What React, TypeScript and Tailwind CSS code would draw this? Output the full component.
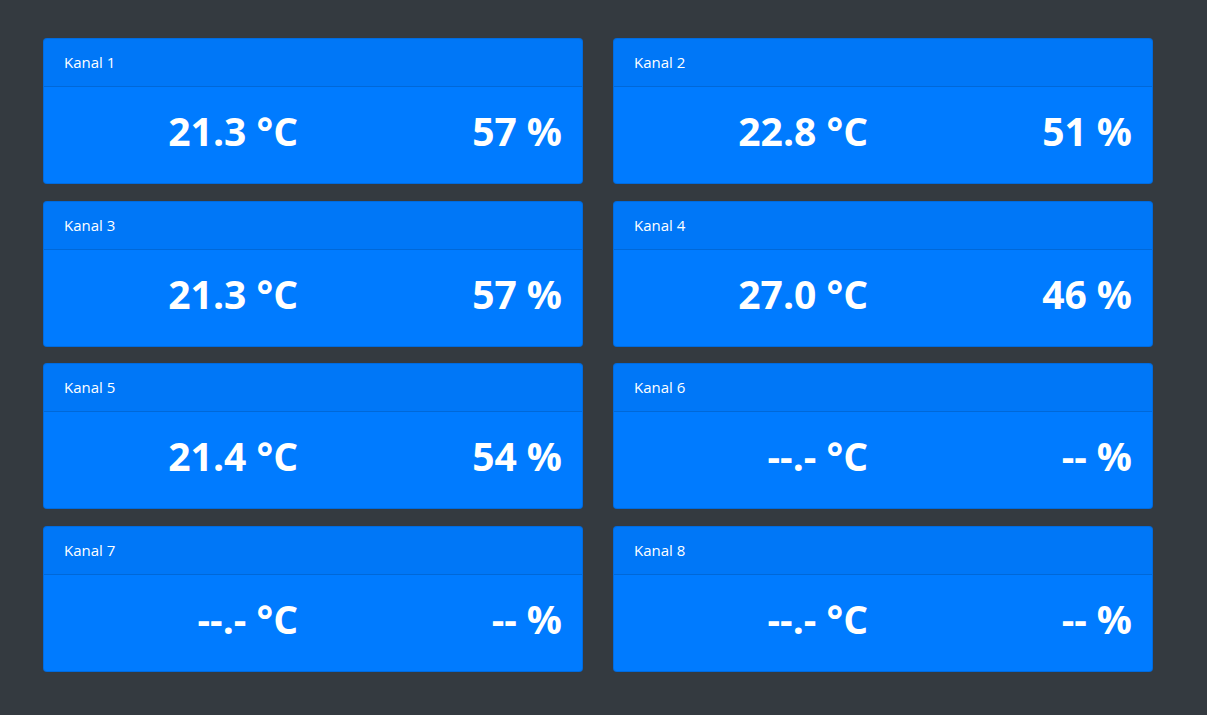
import React from 'react';

const channels = [
  { name: 'Kanal 1', temp: '21.3 °C', hum: '57 %' },
  { name: 'Kanal 2', temp: '22.8 °C', hum: '51 %' },
  { name: 'Kanal 3', temp: '21.3 °C', hum: '57 %' },
  { name: 'Kanal 4', temp: '27.0 °C', hum: '46 %' },
  { name: 'Kanal 5', temp: '21.4 °C', hum: '54 %' },
  { name: 'Kanal 6', temp: '--.- °C', hum: '-- %' },
  { name: 'Kanal 7', temp: '--.- °C', hum: '-- %' },
  { name: 'Kanal 8', temp: '--.- °C', hum: '-- %' },
];

function ChannelCard({ name, temp, hum }: { name: string; temp: string; hum: string }) {
  return (
    <div className="bg-[#007bff] border border-black/[0.125] rounded text-white">
      <div className="px-5 pt-[11px] pb-3 bg-black/[0.03] border-b border-black/[0.125] leading-6 text-[15px]">
        {name}
      </div>
      <div className="p-5">
        <div className="-mx-[15px] grid grid-cols-2 mb-2">
          <div className="px-[15px] text-right text-[39px] leading-[48px] font-bold">{temp}</div>
          <div className="px-[15px] text-right text-[39px] leading-[48px] font-bold">{hum}</div>
        </div>
      </div>
    </div>
  );
}

export default function App() {
  return (
    <div
      className="w-full min-h-screen bg-[#343a40] pt-[38px] pl-[43px]"
      style={{ fontFamily: '"Open Sans", "Noto Sans", sans-serif' }}
    >
      <div className="w-[1110px] grid grid-cols-2 gap-x-[30px] gap-y-[16.67px]">
        {channels.map((c) => (
          <ChannelCard key={c.name} {...c} />
        ))}
      </div>
    </div>
  );
}
